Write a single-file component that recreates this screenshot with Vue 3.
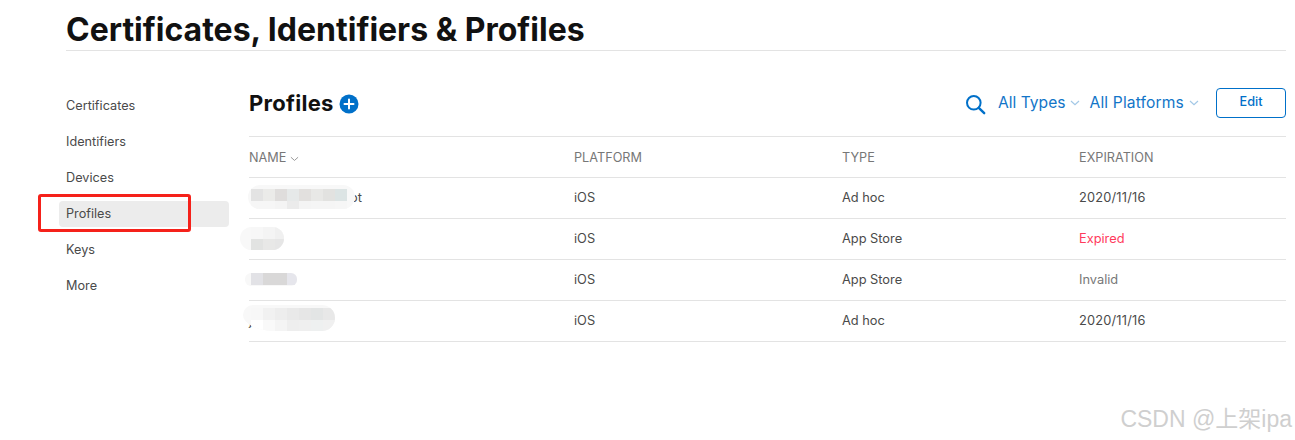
<template>
  <div class="page">
    <h1 class="title">Certificates, Identifiers &amp; Profiles</h1>

    <div class="body">
      <nav class="side">
        <a v-for="item in nav" :key="item" class="side-item" :class="{ active: item === 'Profiles' }">{{ item }}</a>
      </nav>

      <main class="main">
        <div class="toolbar">
          <h2 class="heading">Profiles</h2>
          <svg class="plus" width="20" height="20" viewBox="0 0 20 20">
            <circle cx="10" cy="10" r="9.5" fill="#0070c9" />
            <path d="M10 5.5v9M5.5 10h9" stroke="#fff" stroke-width="2" stroke-linecap="round" />
          </svg>
          <div class="tools">
            <svg class="search" width="21" height="21" viewBox="0 0 21 21" fill="none" stroke="#0070c9">
              <circle cx="8.8" cy="8.8" r="6.8" stroke-width="2" />
              <path d="M13.8 13.8l5.4 5.4" stroke-width="2.4" stroke-linecap="round" />
            </svg>
            <span class="filter">All Types<svg class="chev" width="10" height="6" viewBox="0 0 10 6"><path d="M1 1l4 3.6L9 1" fill="none" stroke="#a3c8e6" stroke-width="1.2" /></svg></span>
            <span class="filter">All Platforms<svg class="chev" width="10" height="6" viewBox="0 0 10 6"><path d="M1 1l4 3.6L9 1" fill="none" stroke="#a3c8e6" stroke-width="1.2" /></svg></span>
            <button class="edit">Edit</button>
          </div>
        </div>

        <div class="row head">
          <div>NAME<svg class="chev-head" width="9" height="6" viewBox="0 0 10 6"><path d="M1 1l4 3.6L9 1" fill="none" stroke="#999" stroke-width="1.1" /></svg></div>
          <div>PLATFORM</div>
          <div>TYPE</div>
          <div>EXPIRATION</div>
        </div>
        <div v-for="(p, i) in profiles" :key="i" class="row item">
          <div :class="{ tail: p.name === 'ot' }">{{ p.name }}</div>
          <div>{{ p.platform }}</div>
          <div>{{ p.type }}</div>
          <div :class="p.status">{{ p.expires }}</div>
        </div>
      </main>
    </div>

    <!-- annotations painted over the screenshot -->
    <div
      v-for="(s, i) in smudges"
      :key="'s' + i"
      class="smudge"
      :style="{ left: s.x + 'px', top: s.y + 'px', width: s.w + 'px', height: s.h + 'px', paddingLeft: s.px + 'px', paddingTop: s.py + 'px', borderRadius: s.radius }"
    >
      <div v-for="(r, k) in s.rows" :key="k" class="cells">
        <span v-for="(c, j) in r" :key="j" class="cell" :style="{ background: c }"></span>
      </div>
    </div>
    <div class="marker"></div>
    <div class="watermark">CSDN @上架ipa</div>
  </div>
</template>

<script setup>
const nav = ['Certificates', 'Identifiers', 'Devices', 'Profiles', 'Keys', 'More']

const profiles = [
  { name: 'ot', platform: 'iOS', type: 'Ad hoc', expires: '2020/11/16', status: 'date' },
  { name: '', platform: 'iOS', type: 'App Store', expires: 'Expired', status: 'expired' },
  { name: '', platform: 'iOS', type: 'App Store', expires: 'Invalid', status: 'invalid' },
  { name: 'j', platform: 'iOS', type: 'Ad hoc', expires: '2020/11/16', status: 'date' }
]

const smudges = [
  {
    x: 248, y: 185, w: 107, h: 24, px: 3, py: 4, radius: '12px',
    rows: [
      ['#e3e3e3', '#ebebe9', '#dfdddc', '#e6e9e9', '#e2e0de', '#e8e8e6', '#e2e2e0', '#dce4e4'],
      ['#f6f6f6', '#f6f6f6', '#f4f4f4', '#ebebeb', '#f4f4f4', '#f5f5f5', '#f5f5f5', '#f6f6f6']
    ]
  },
  {
    x: 240, y: 227, w: 44, h: 23, px: 11, py: 0, radius: '12px',
    rows: [
      ['#f7f7f7', '#f4f4f4', '#f0f0f0', '#f4f4f4'],
      ['#e2e3e2', '#e8e8e7', '#e6e6e6', '#f7f7f7']
    ]
  },
  {
    x: 245, y: 273, w: 52, h: 13, px: 6, py: 0, radius: '6px',
    rows: [['#e2e2e6', '#d9d8d8', '#d9d8d8', '#e6e6ec']]
  },
  {
    x: 243, y: 305, w: 92, h: 26, px: 8, py: 3, radius: '10px 13px 13px 32px / 10px 13px 13px 16px',
    rows: [
      ['#f7f7f7', '#f1f1f1', '#ededed', '#e9e9e9', '#e6e6e6', '#e3e5e5', '#e8e8e8'],
      ['#ffffff', '#f9f9f9', '#f4f4f4', '#eeeeee', '#efefef', '#eef0f0', '#f0f0f0']
    ]
  }
]
</script>

<style>
body {
  background: #fff;
}
</style>

<style scoped>
.page {
  position: relative;
  width: 1295px;
  height: 440px;
  padding: 0 9px 0 66px;
  box-sizing: border-box;
  overflow: hidden;
  font-family: Inter, "Noto Sans CJK SC", sans-serif;
  color: #333;
}

.title {
  margin: 0;
  height: 50px;
  line-height: 59px;
  font-size: 32px;
  font-weight: 700;
  color: #111;
  border-bottom: 1px solid #e3e3e3;
}

.body {
  display: flex;
}

.side {
  width: 183px;
  flex: none;
  padding-top: 36px;
}

.side-item {
  display: block;
  height: 36px;
  line-height: 37px;
  font-size: 12.7px;
  color: #4a4a4a;
}

.side-item.active {
  position: relative;
  z-index: 0;
}

.side-item.active::before {
  content: "";
  position: absolute;
  z-index: -1;
  left: -7px;
  right: 20px;
  top: 6px;
  bottom: 4px;
  background: #ececec;
  border-radius: 4px;
}

.main {
  flex: 1;
}

.toolbar {
  display: flex;
  align-items: center;
  height: 86px;
  padding-top: 19px;
  box-sizing: border-box;
  border-bottom: 1px solid #e3e3e3;
}

.heading {
  margin: 0 5px 0 0;
  font-size: 22px;
  font-weight: 700;
  letter-spacing: 0.28px;
  color: #111;
}

.plus {
  position: relative;
  top: 1px;
}

.tools {
  margin-left: auto;
  display: flex;
  align-items: center;
}

.search {
  margin-right: 12px;
  position: relative;
  top: 1px;
}

.filter {
  display: flex;
  align-items: center;
  height: 22px;
  padding-bottom: 2px;
  box-sizing: border-box;
  font-size: 15.6px;
  color: #1275c8;
  margin-right: 9px;
}

.chev {
  margin-left: 5px;
  margin-top: 2px;
}

.filter + .filter {
  margin-right: 17px;
  letter-spacing: 0.15px;
}

.edit {
  width: 70px;
  height: 30px;
  padding: 0 0 4px;
  border: 1px solid #0070c9;
  border-radius: 4px;
  background: #fff;
  color: #0070c9;
  font: 500 12.7px Inter, sans-serif;
}

.row {
  display: grid;
  grid-template-columns: 325px 268px 237px 1fr;
  align-items: center;
  height: 41px;
  box-sizing: border-box;
  border-bottom: 1px solid #e3e3e3;
  font-size: 12.8px;
  color: #4a4a4a;
}

.item {
  padding-bottom: 1px;
}

.head {
  color: #777;
  font-size: 12.7px;
}

.chev-head {
  margin-left: 4px;
}

.tail {
  padding-left: 101px;
}

.date {
  letter-spacing: 0.2px;
}

.expired {
  color: #ff3b5c;
}

.invalid {
  color: #777;
}

.smudge {
  position: absolute;
  box-sizing: border-box;
  background: #f8f8f8;
  overflow: hidden;
}

.cells {
  display: flex;
}

.cell {
  flex: none;
  width: 12px;
  height: 12px;
}

.marker {
  position: absolute;
  left: 38px;
  top: 194px;
  width: 153px;
  height: 38px;
  box-sizing: border-box;
  border: 3px solid #f5211a;
  border-radius: 3px;
}

.watermark {
  position: absolute;
  right: 3px;
  top: 404px;
  font-family: "Liberation Sans", "Noto Sans CJK SC", sans-serif;
  font-size: 23px;
  line-height: 30px;
  color: #cfcfcf;
  white-space: nowrap;
}
</style>
